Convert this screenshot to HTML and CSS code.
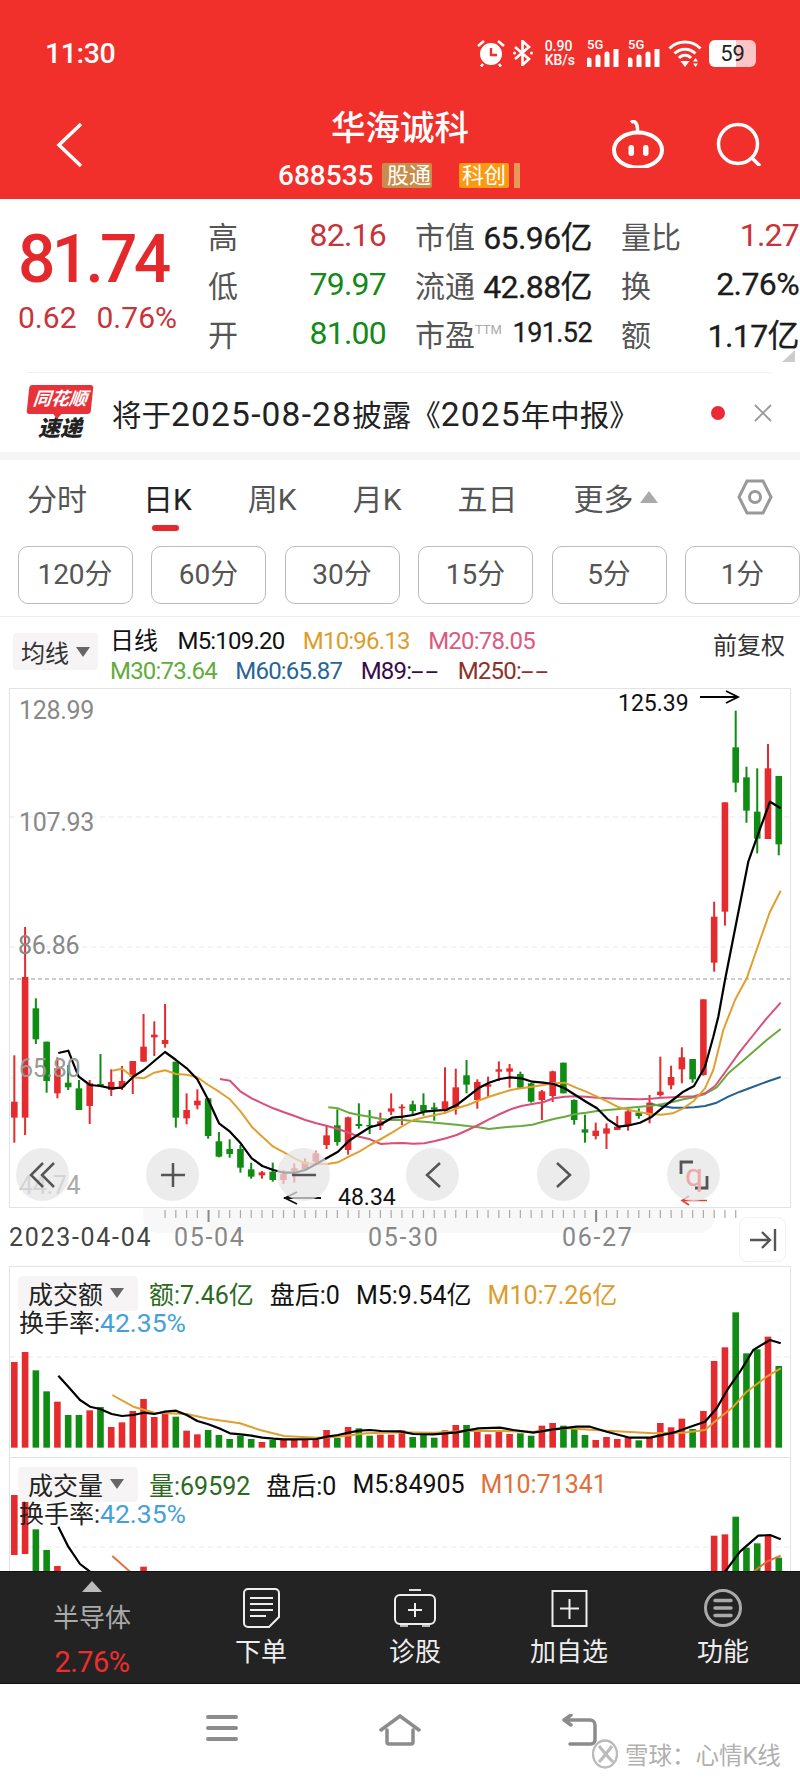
FILE: index.html
```html
<!DOCTYPE html>
<html lang="zh-CN">
<head>
    <meta charset="UTF-8">
    <meta name="viewport" content="width=device-width, initial-scale=1.0">
    <title>华海诚科</title>
    <link rel="stylesheet" href="styles.css">
</head>
<body>
    <!-- 顶部红色区域 -->
    <header class="top">
        <div class="status">
            <span class="clock">11:30</span>
            <div class="status-icons">
                <svg class="ico-alarm" viewBox="0 0 28 28" width="28" height="28">
                    <circle cx="14" cy="15" r="11" fill="#fff"/>
                    <path d="M14 9v7h6" fill="none" stroke="#f2302b" stroke-width="2.4"/>
                    <path d="M1 7l6-5M27 7l-6-5M6 25l-2 2.500M22 25l2 2.500" stroke="#fff" stroke-width="2.600" fill="none"/>
                </svg>
                <svg class="ico-bt" viewBox="0 0 22 26" width="22" height="26">
                    <path d="M3 7l14 12-6.500 6V1L17 7 3 19" fill="none" stroke="#fff" stroke-width="2.600"/>
                    <circle cx="2.500" cy="13" r="1.500" fill="#fff"/>
                    <circle cx="19.500" cy="13" r="1.500" fill="#fff"/>
                </svg>
                <div class="speed"><span>0.90</span><span>KB/s</span></div>
                <div class="signal">
                    <span class="sig-label">5G</span>
                    <svg viewBox="0 0 32 18" width="32" height="18"><path d="M2 11v6M11 8v9M20 5v12M29 1v16" stroke="#fff" stroke-width="5" stroke-linecap="round" fill="none"/></svg>
                </div>
                <div class="signal">
                    <span class="sig-label">5G</span>
                    <svg viewBox="0 0 32 18" width="32" height="18"><path d="M2 11v6M11 8v9M20 5v12M29 1v16" stroke="#fff" stroke-width="5" stroke-linecap="round" fill="none"/></svg>
                </div>
                <svg class="ico-wifi" viewBox="0 0 34 27" width="34" height="27">
                    <path d="M1.500 8.500a22 22 0 0 1 31 0M6.500 13.500a15 15 0 0 1 21 0M11 18a8 8 0 0 1 12 0" fill="none" stroke="#fff" stroke-width="3"/>
                    <path d="M17 27l-4.500-6h9zM27.500 18l2.500 3.500h-5zM27.500 27l2.500-3.500h-5z" fill="#fff"/>
                </svg>
                <div class="battery">59</div>
            </div>
        </div>
        <div class="nav">
            <svg class="back" viewBox="0 0 28 46" width="28" height="46"><path d="M25 2L3 23l22 21" fill="none" stroke="#fff" stroke-width="3.500"/></svg>
            <div class="title-box">
                <h1>华海诚科</h1>
                <div class="code-row">
                    <span class="code">688535</span>
                    <span class="tag tag-tan">股通</span>
                    <span class="tag tag-orange">科创</span>
                    <span class="tag-sliver"></span>
                </div>
            </div>
            <div class="nav-right">
                <svg viewBox="0 0 52 48" width="52" height="48">
                    <ellipse cx="26" cy="30" rx="24" ry="17.500" fill="none" stroke="#fff" stroke-width="4"/>
                    <path d="M19 2.500c3-2.500 7 0 6.500 9" fill="none" stroke="#fff" stroke-width="3.500"/>
                    <rect x="16.500" y="25" width="5.500" height="11" rx="2.700" fill="#fff"/>
                    <rect x="31" y="25" width="5.500" height="11" rx="2.700" fill="#fff"/>
                </svg>
                <svg viewBox="0 0 46 46" width="46" height="46">
                    <circle cx="22" cy="24" r="19.500" fill="none" stroke="#fff" stroke-width="3.500"/>
                    <path d="M36 38l8 8" stroke="#fff" stroke-width="3.500"/>
                </svg>
            </div>
        </div>
    </header>

    <!-- 行情 -->
    <section class="quote">
        <div class="quote-main">
            <div class="price-box">
                <div class="price">81.74</div>
                <div class="change"><span>0.62</span><span>0.76%</span></div>
            </div>
            <div class="quote-grid">
                <div class="cell"><span class="lab">高</span><span class="num up">82.16</span></div>
                <div class="cell"><span class="lab">市值</span><span class="val">65.96亿</span></div>
                <div class="cell"><span class="lab">量比</span><span class="num up">1.27</span></div>
                <div class="cell"><span class="lab">低</span><span class="num down">79.97</span></div>
                <div class="cell"><span class="lab">流通</span><span class="val">42.88亿</span></div>
                <div class="cell"><span class="lab">换</span><span class="val">2.76%</span></div>
                <div class="cell"><span class="lab">开</span><span class="num down">81.00</span></div>
                <div class="cell"><span class="lab">市盈<sup>TTM</sup></span><span class="val val-small">191.52</span></div>
                <div class="cell"><span class="lab">额</span><span class="val">1.17亿</span></div>
            </div>
            <span class="corner"></span>
        </div>
        <div class="news">
            <div class="news-logo">
                <span class="logo-top">同花顺</span>
                <span class="logo-bottom">速递</span>
            </div>
            <p>将于<span>2025-08-28</span>披露《<span>2025</span>年中报》</p>
            <span class="news-dot"></span>
            <svg class="news-x" viewBox="0 0 18 18" width="18" height="18"><path d="M1 1l16 16M17 1L1 17" stroke="#9a9a9a" stroke-width="1.800"/></svg>
        </div>
    </section>

    <!-- 周期 -->
    <section class="periods">
        <div class="tabs">
            <span>分时</span>
            <span class="active">日K</span>
            <span>周K</span>
            <span>月K</span>
            <span>五日</span>
            <span class="more">更多<i class="tri-up"></i></span>
            <svg class="hex" viewBox="0 0 36 36" width="36" height="36">
                <path d="M10 2h16l8 16-8 16H10L2 18z" fill="none" stroke="#999" stroke-width="3"/>
                <circle cx="18" cy="18" r="5.500" fill="none" stroke="#999" stroke-width="3"/>
            </svg>
        </div>
        <div class="minutes">
            <span>120分</span><span>60分</span><span>30分</span><span>15分</span><span>5分</span><span>1分</span>
        </div>
    </section>

    <!-- 均线图例 -->
    <section class="legend">
        <div class="picker picker-ma">均线<i class="tri-down"></i></div>
        <div class="legend-lines">
            <div class="legend-row">
                <span class="c-black legend-first">日线</span>
                <span class="c-black">M5:109.20</span>
                <span class="c-orange">M10:96.13</span>
                <span class="c-pink">M20:78.05</span>
            </div>
            <div class="legend-row">
                <span class="c-green">M30:73.64</span>
                <span class="c-blue">M60:65.87</span>
                <span class="c-purple">M89:<span class="dashes">--</span></span>
                <span class="c-brown">M250:<span class="dashes">--</span></span>
            </div>
        </div>
        <span class="fuquan">前复权</span>
    </section>

    <!-- K线图 -->
    <section class="kline">
        <svg id="klineSvg" class="chart" viewBox="10 689 780 518"></svg>
        <span class="axis axis-1">128.99</span>
        <span class="axis axis-2">107.93</span>
        <span class="axis axis-3">86.86</span>
        <span class="axis axis-4">65.80</span>
        <span class="axis axis-5">44.74</span>
        <span class="mark mark-high">125.39</span>
        <span class="mark mark-low">48.34</span>
        <button class="round r1"><svg viewBox="0 0 30 30" width="30" height="30"><path d="M15 3L3 15l12 12M26 3L14 15l12 12" fill="none" stroke="#555" stroke-width="2.500"/></svg></button>
        <button class="round r2"><svg viewBox="0 0 26 26" width="26" height="26"><path d="M13 1v24M1 13h24" stroke="#555" stroke-width="2.500"/></svg></button>
        <button class="round r3"><svg viewBox="0 0 26 26" width="26" height="26"><path d="M1 13h24" stroke="#555" stroke-width="2.500"/></svg></button>
        <button class="round r4"><svg viewBox="0 0 18 28" width="18" height="28"><path d="M16 2L3 14l13 12" fill="none" stroke="#555" stroke-width="2.500"/></svg></button>
        <button class="round r5"><svg viewBox="0 0 18 28" width="18" height="28"><path d="M2 2l13 12L2 26" fill="none" stroke="#555" stroke-width="2.500"/></svg></button>
        <button class="round r6"><svg viewBox="0 0 30 30" width="30" height="30"><path d="M14 2H2v12M16 28h12V16" fill="none" stroke="#555" stroke-width="2.800"/></svg></button>
        <span class="ghost-q">q</span>
    </section>

    <!-- 时间轴 -->
    <section class="timeline">
        <div class="scrollband"></div>
        <svg id="tickSvg" class="ticks" viewBox="0 0 800 14"></svg>
        <div class="dates">
            <span class="date-first">2023-04-04</span>
            <span class="date d1">05-04</span>
            <span class="date d2">05-30</span>
            <span class="date d3">06-27</span>
        </div>
        <div class="to-end"><svg viewBox="0 0 28 24" width="28" height="24"><path d="M1 12h20M13 4l8 8-8 8M26 1v22" fill="none" stroke="#555" stroke-width="2.400"/></svg></div>
    </section>

    <!-- 成交额 -->
    <section class="panel panel-amount">
        <svg id="amountSvg" class="chart" viewBox="10 1267 780 190"></svg>
        <div class="panel-head">
            <div class="picker picker-panel">成交额<i class="tri-down"></i></div>
            <span class="c-dgreen">额:7.46亿</span>
            <span class="c-black">盘后:0</span>
            <span class="c-black">M5:9.54亿</span>
            <span class="c-orange">M10:7.26亿</span>
        </div>
        <div class="rate">换手率:<span>42.35%</span></div>
    </section>

    <!-- 成交量 -->
    <section class="panel panel-volume">
        <svg id="volumeSvg" class="chart" viewBox="10 1458 780 113"></svg>
        <div class="panel-head">
            <div class="picker picker-panel">成交量<i class="tri-down"></i></div>
            <span class="c-dgreen">量:69592</span>
            <span class="c-black">盘后:0</span>
            <span class="c-black">M5:84905</span>
            <span class="c-coral">M10:71341</span>
        </div>
        <div class="rate">换手率:<span>42.35%</span></div>
    </section>

    <!-- 底部工具栏 -->
    <nav class="toolbar">
        <div class="tool tool-sector">
            <i class="tri-up tri-light"></i>
            <span class="sector-name">半导体</span>
            <span class="sector-pct">2.76%</span>
        </div>
        <div class="tool">
            <svg viewBox="0 0 37 40" width="37" height="40">
                <path d="M5 1h27a4 4 0 0 1 4 4v24L26 39H5a4 4 0 0 1-4-4V5a4 4 0 0 1 4-4z" fill="none" stroke="#eee" stroke-width="2"/>
                <path d="M7 10h23M7 16h23M7 22h23M7 28h16" stroke="#eee" stroke-width="2"/>
            </svg>
            <span>下单</span>
        </div>
        <div class="tool">
            <svg viewBox="0 0 44 40" width="44" height="40">
                <path d="M16 2h12" stroke="#ddd" stroke-width="2"/>
                <rect x="2" y="7" width="40" height="29" rx="5" fill="none" stroke="#eee" stroke-width="2"/>
                <path d="M22 15v14M15 22h14" stroke="#eee" stroke-width="2"/>
                <path d="M7 37h8v2H7zM29 37h8v2h-8z" fill="#bbb"/>
            </svg>
            <span>诊股</span>
        </div>
        <div class="tool">
            <svg viewBox="0 0 37 40" width="37" height="40">
                <rect x="1.500" y="3" width="34" height="35" fill="none" stroke="#eee" stroke-width="2"/>
                <path d="M18.500 11v20M9 20.500h19" stroke="#eee" stroke-width="2"/>
            </svg>
            <span>加自选</span>
        </div>
        <div class="tool">
            <svg viewBox="0 0 40 40" width="40" height="40">
                <circle cx="20" cy="20" r="17.500" fill="none" stroke="#aaa" stroke-width="3"/>
                <path d="M12 12.500h16M12 20h16M12 27.500h16" stroke="#aaa" stroke-width="3.500" stroke-linecap="round"/>
            </svg>
            <span>功能</span>
        </div>
    </nav>

    <!-- 系统导航 -->
    <footer class="sysnav">
        <svg viewBox="0 0 32 28" width="32" height="28"><path d="M2 3h28M2 14h28M2 25h28" stroke="#8c8c8c" stroke-width="4" stroke-linecap="round"/></svg>
        <svg viewBox="0 0 42 32" width="42" height="32"><path d="M2 16L21 2l19 14M8 16v12a2 2 0 0 0 2 2h22a2 2 0 0 0 2-2V16" fill="none" stroke="#8c8c8c" stroke-width="3.500" stroke-linecap="round"/></svg>
        <svg viewBox="0 0 36 32" width="36" height="32"><path d="M2 6h26a5 5 0 0 1 5 5v15a4 4 0 0 1-4 4H8M2 6l7-5M2 6l7 5" fill="none" stroke="#8c8c8c" stroke-width="3.500" stroke-linecap="round"/></svg>
        <div class="watermark">
            <svg viewBox="0 0 26 30" width="26" height="30"><ellipse cx="13" cy="15" rx="12" ry="13.500" fill="none" stroke="#bbb" stroke-width="2.400"/><path d="M7 7c4 5 9 11 14 16M20 7c-4 5-8 11-13 16" fill="none" stroke="#bbb" stroke-width="3"/></svg>
            <span>雪球：心情K线</span>
        </div>
    </footer>

    <script src="chart.js"></script>
</body>
</html>
```

FILE: styles.css
```css
* {
    box-sizing: border-box;
}
body {
    margin: 0;
    width: 800px;
    height: 1778px;
    overflow: hidden;
    background-color: #fff;
    color: #222;
    font-family: Roboto, "Noto Sans CJK SC", sans-serif;
}
svg {
    display: block;
}

/* 顶部 */
.top {
    height: 199px;
    padding-top: 38px;
    background-color: #f2302b;
    color: #fff;
}
.status {
    display: flex;
    justify-content: space-between;
    align-items: center;
    height: 30px;
    padding: 0 44px 0 45px;
}
.clock {
    font-size: 28.500px;
    font-weight: 500;
    letter-spacing: -0.4px;
}
.status-icons {
    display: flex;
    align-items: center;
}
.ico-alarm {
    margin-right: -1px;
}
.ico-bt {
    margin-left: 8px;
}
.speed {
    display: flex;
    flex-direction: column;
    margin-left: 11px;
    font-size: 14px;
    line-height: 14px;
    font-weight: 500;
}
.signal {
    position: relative;
    width: 32px;
    height: 27px;
    margin-left: 9px;
    padding-top: 9px;
}
.speed + .signal {
    margin-left: 12px;
}
.sig-label {
    position: absolute;
    top: -2px;
    left: 0;
    font-size: 13px;
    line-height: 14px;
    font-weight: 500;
}
.ico-wifi {
    margin-left: 8px;
}
.battery {
    width: 47px;
    height: 27px;
    margin-left: 7px;
    border-radius: 6px;
    background: linear-gradient(90deg, #fff 0, #fff 58%, #fdc6c6 58%, #fdc6c6 100%);
    color: #222;
    font-size: 22px;
    line-height: 27px;
    text-align: center;
}
.nav {
    position: relative;
    display: flex;
    align-items: flex-start;
    justify-content: space-between;
    padding: 30px 38px 0 56px;
}
.back {
    margin-top: 24px;
}
.title-box {
    position: absolute;
    left: 0;
    right: 0;
    top: 38px;
    text-align: center;
}
h1 {
    margin: 0;
    font-size: 34.500px;
    line-height: 44px;
    font-weight: 500;
}
.code-row {
    display: flex;
    align-items: center;
    height: 26px;
    margin-top: 12px;
    padding-left: 278px;
    text-align: left;
}
.code {
    width: 104px;
    font-size: 28px;
    font-weight: 500;
}
.tag {
    width: 50px;
    height: 25px;
    border-radius: 2px;
    font-size: 22px;
    line-height: 25px;
    text-align: center;
}
.tag-tan {
    padding-left: 4px;
    margin-right: 27px;
    background-color: #c98c4a;
}
.tag-orange {
    background-color: #f89a12;
}
.tag-sliver {
    width: 6px;
    height: 25px;
    margin-left: 5px;
    background-color: #e79a58;
}
.nav-right {
    display: flex;
    align-items: flex-start;
    gap: 52px;
    margin-top: 22px;
}

/* 行情 */
.quote {
    height: 253px;
}
.quote-main {
    position: relative;
    display: flex;
    height: 173px;
}
.price-box {
    width: 208px;
    padding: 27px 0 0 18px;
}
.price {
    font-size: 66px;
    line-height: 68px;
    font-weight: 500;
    color: #e4292d;
    letter-spacing: -3.800px;
}
.change {
    display: flex;
    gap: 20px;
    margin-top: 7px;
    font-size: 30px;
    line-height: 34px;
    color: #c8343a;
}
.quote-grid {
    display: grid;
    grid-template-columns: 178px 177px 178px;
    grid-auto-rows: 49px;
    column-gap: 29px;
    padding-top: 11px;
}
.cell {
    display: flex;
    justify-content: space-between;
    align-items: center;
}
.lab {
    font-size: 30px;
    color: #555;
}
.lab sup {
    font-size: 13px;
    color: #aaa;
    vertical-align: 12px;
    line-height: 0;
}
.num {
    font-size: 32px;
    letter-spacing: -0.8px;
}
.val {
    font-size: 32px;
    color: #1c1c1c;
    letter-spacing: -0.6px;
    -webkit-text-stroke: 0.3px #1c1c1c;
}
.val-small {
    font-size: 27px;
}
.up {
    color: #c8343a;
}
.down {
    color: #128a18;
}
.corner {
    position: absolute;
    right: 5px;
    bottom: 10px;
    border-style: solid;
    border-width: 0 0 12px 13px;
    border-color: transparent transparent #ccc transparent;
}
.news {
    display: flex;
    align-items: center;
    height: 80px;
    margin: 0 28px 0 27px;
    border-top: 1px solid #f0f0f0;
}
.news-logo {
    display: flex;
    flex-direction: column;
    align-items: center;
    width: 66px;
    font-style: italic;
}
.logo-top {
    position: relative;
    width: 64px;
    height: 29px;
    margin-bottom: 2px;
    background-color: #e8323a;
    border-radius: 3px;
    color: #fff;
    font-size: 18px;
    line-height: 28px;
    font-weight: 700;
    text-align: center;
    transform: skewX(-6deg);
}
.logo-top::after {
    content: "";
    position: absolute;
    left: 26px;
    bottom: -5px;
    border-style: solid;
    border-width: 6px 5px 0 5px;
    border-color: #e8323a transparent transparent transparent;
}
.logo-bottom {
    font-size: 22px;
    line-height: 25px;
    font-weight: 900;
    color: #222;
}
.news p {
    margin: 0 0 0 19px;
    font-size: 29.500px;
    color: #222;
    white-space: nowrap;
}
.news p span {
    font-size: 33.500px;
    line-height: 1;
    letter-spacing: 1.200px;
}
.news-dot {
    width: 14px;
    height: 14px;
    margin-left: auto;
    border-radius: 50%;
    background-color: #ea2a36;
}
.news-x {
    margin: 0 0 0 29px;
}

/* 周期 */
.periods {
    height: 165px;
    border-top: 8px solid #f5f5f5;
    border-bottom: 1px solid #eee;
}
.tabs {
    display: flex;
    align-items: center;
    gap: 56px;
    height: 72px;
    padding: 2px 27px 0 27px;
    font-size: 30px;
    color: #555;
}
.tabs .active {
    position: relative;
    color: #222;
}
.tabs .active::after {
    content: "";
    position: absolute;
    left: 9px;
    top: 50px;
    width: 27px;
    height: 6px;
    border-radius: 3px;
    background-color: #e4282e;
}
.more {
    display: flex;
    align-items: center;
}
.tri-up {
    display: inline-block;
    width: 0;
    height: 0;
    margin-left: 7px;
    border-style: solid;
    border-width: 0 9px 12px 9px;
    border-color: transparent transparent #aaa transparent;
}
.hex {
    margin-left: auto;
}
.minutes {
    display: flex;
    gap: 18.500px;
    padding: 14px 0 0 17.500px;
    overflow: hidden;
}
.minutes span {
    flex: none;
    width: 115px;
    height: 58px;
    border: 1px solid #bbb;
    border-radius: 10px;
    font-size: 28px;
    line-height: 56px;
    text-align: center;
    color: #555;
}

/* 图例 */
.legend {
    position: relative;
    display: flex;
    height: 71px;
    padding: 11px 0 0 13px;
}
.picker {
    display: flex;
    align-items: center;
    background-color: #f6f4f5;
    border-radius: 4px;
    color: #333;
}
.picker-ma {
    width: 85px;
    height: 37px;
    margin-top: 5px;
    padding-left: 8px;
    font-size: 24px;
}
.tri-down {
    display: inline-block;
    width: 0;
    height: 0;
    margin-left: 7px;
    border-style: solid;
    border-width: 10px 7px 0 7px;
    border-color: #666 transparent transparent transparent;
}
.legend-lines {
    margin-left: 12px;
    font-size: 24px;
    letter-spacing: -0.8px;
}
.legend-row {
    display: flex;
    gap: 18.500px;
    height: 30px;
    line-height: 26px;
    white-space: nowrap;
}
.legend-first {
    margin-right: 1px;
    letter-spacing: 0;
}
.dashes {
    display: inline-block;
    width: 28px;
    letter-spacing: 1px;
    transform: scaleX(1.900);
    transform-origin: left center;
}
.fuquan {
    position: absolute;
    top: 9px;
    right: 15px;
    font-size: 24px;
    color: #333;
}
.c-black { color: #111; }
.c-orange { color: #dd9c2b; }
.c-pink { color: #dc5a7f; }
.c-green { color: #62ac3c; }
.c-blue { color: #296596; }
.c-purple { color: #3a0a4a; }
.c-brown { color: #8c3228; }
.c-dgreen { color: #2b6a1e; }
.c-coral { color: #e0703c; }

/* K线图 */
.kline {
    position: relative;
    width: 782px;
    height: 520px;
    margin-left: 9px;
    border: 1px solid #e3e3e3;
}
.chart {
    position: absolute;
    left: 0;
    top: 0;
    width: 100%;
    height: 100%;
}
.axis {
    position: absolute;
    left: 9px;
    font-size: 25px;
    line-height: 28px;
    letter-spacing: -0.3px;
    color: #888;
}
.axis-1 { top: 8px; }
.axis-2 { top: 120px; }
.axis-3 { top: 243px; left: 8px; }
.axis-4 { top: 366px; color: #999; }
.axis-5 { top: 483px; color: #aaa; }
.mark {
    position: absolute;
    font-size: 23px;
    line-height: 26px;
    color: #111;
}
.mark-high {
    left: 608px;
    top: 2px;
}
.mark-low {
    left: 328px;
    top: 496px;
}
.round {
    position: absolute;
    top: 459px;
    display: flex;
    align-items: center;
    justify-content: center;
    width: 53px;
    height: 53px;
    padding: 0;
    border: none;
    border-radius: 50%;
    background-color: rgba(228, 228, 228, 0.72);
}
.r1 { left: 6px; }
.r2 { left: 136px; }
.r3 { left: 267px; }
.r4 { left: 396px; }
.r5 { left: 527px; }
.r6 { left: 657px; }
.ghost-q {
    position: absolute;
    left: 675px;
    top: 468px;
    font-size: 32px;
    line-height: 36px;
    color: #eda9a9;
}

/* 时间轴 */
.timeline {
    position: relative;
    height: 58px;
}
.scrollband {
    position: absolute;
    left: 143px;
    top: 0;
    width: 572px;
    height: 25px;
    border-radius: 0 0 16px 16px;
    background-color: #f8f8f8;
}
.ticks {
    position: absolute;
    left: 0;
    top: 0;
    width: 800px;
    height: 14px;
}
.dates {
    position: relative;
    height: 58px;
    font-size: 25px;
    color: #888;
    letter-spacing: 1.700px;
}
.date-first {
    position: absolute;
    left: 9px;
    top: 15px;
    color: #444;
}
.date {
    position: absolute;
    top: 15px;
}
.d1 { left: 174px; }
.d2 { left: 368px; }
.d3 { left: 562px; }
.to-end {
    position: absolute;
    left: 739px;
    top: 9px;
    display: flex;
    align-items: center;
    justify-content: center;
    width: 47px;
    height: 45px;
    border: 1px solid #f1f1f1;
    border-radius: 8px;
}

/* 副图 */
.panel {
    position: relative;
    width: 782px;
    margin-left: 9px;
    border: 1px solid #e3e3e3;
    border-bottom: none;
    font-size: 25px;
}
.panel-amount {
    height: 191px;
}
.panel-volume {
    height: 114px;
    overflow: hidden;
}
.panel-head {
    position: relative;
    display: flex;
    align-items: center;
    gap: 16px;
    padding: 8px 0 0 8px;
    white-space: nowrap;
}
.picker-panel {
    width: 120px;
    height: 35px;
    margin-right: -5px;
    padding-left: 10px;
    font-size: 25px;
    color: #222;
}
.rate {
    position: relative;
    margin: -4px 0 0 9px;
    line-height: 32px;
    color: #222;
}
.rate span {
    font-size: 26.500px;
    color: #45a0da;
}

/* 底部工具栏 */
.toolbar {
    display: grid;
    grid-template-columns: 184px 154px 154px 154px 154px;
    height: 113px;
    background-color: #232323;
    border-top: 1px solid #111;
    border-bottom: 1px solid #111;
    color: #eee;
    font-size: 26px;
}
.tool {
    display: flex;
    flex-direction: column;
    align-items: center;
    padding-top: 16px;
}
.tool span {
    line-height: 36px;
    margin-top: 6px;
}
.tool-sector {
    padding-top: 9px;
}
.tri-light {
    margin: 0;
    border-bottom-color: #bbb;
    border-width: 0 10px 11px 10px;
}
.tool-sector .sector-name {
    margin-top: 8px;
    color: #aaa;
}
.tool-sector .sector-pct {
    margin-top: 8px;
    font-size: 29px;
    letter-spacing: -0.6px;
    color: #ee2e2e;
}

/* 系统导航 */
.sysnav {
    position: relative;
    display: flex;
    align-items: flex-start;
    height: 94px;
    padding: 30px 0 0 206px;
    gap: 141px;
}
.watermark {
    position: absolute;
    left: 592px;
    top: 53px;
    display: flex;
    align-items: center;
    gap: 7px;
    font-size: 23.500px;
    color: #b0b0b0;
    text-shadow: 0 0 1px #fff;
}
```

FILE: chart.js
```js
// 坐标都按截图放大 3 倍后读取: x 为页面 x*3, y 为相对基准线的值
const RED = '#e62b2e';
const GREEN = '#108c14';
const NS = 'http://www.w3.org/2000/svg';

function slotX(i) {
    return (43 + 32.3 * i) / 3;
}

function add(svg, name, attrs) {
    const el = document.createElementNS(NS, name);
    Object.keys(attrs).forEach(key => el.setAttribute(key, attrs[key]));
    svg.appendChild(el);
    return el;
}

function drawLine(svg, pts, color, width, toY) {
    const d = pts.map(p => (p[0] / 3).toFixed(1) + ',' + toY(p[1]).toFixed(1)).join(' ');
    add(svg, 'polyline', {
        points: d,
        fill: 'none',
        stroke: color,
        'stroke-width': width,
        'stroke-linejoin': 'round'
    });
}

function drawDash(svg, y, color, dash) {
    add(svg, 'line', { x1: 10, x2: 790, y1: y, y2: y, stroke: color, 'stroke-width': 1, 'stroke-dasharray': dash });
}

// 主图 [r/g, 最高, 实体上, 实体下, 最低]
const candles = [
    'r 226 365 413 488', 'r -159 -9 413 465', 'g 55 85 178 192', 'g 185 185 303 338',
    'r 232 265 340 355', 'g 255 308 322 330', 'g 300 325 390 390', 'r 300 310 378 432',
    'g 222 312 318 320', 'r 268 306 330 348', 'r 258 303 322 330', 'r 243 243 290 342',
    'r 102 200 245 245', 'r 124 164 172 228', 'r 72 180 192 203', 'g 245 245 413 443',
    'r 340 390 415 433', 'r 328 362 376 388', 'g 355 355 468 476', 'g 456 484 530 532',
    'g 478 507 522 533', 'g 495 507 563 578', 'g 548 568 590 596', 'r 573 577 586 596',
    'g 548 575 600 605', 'r 570 582 600 612', 'r 550 565 572 608', 'r 535 545 568 570',
    'r 512 520 545 552', 'r 437 466 495 507', 'g 388 436 486 497', 'r 410 412 510 524',
    'g 370 432 438 446', 'g 390 435 437 462', 'r 398 424 437 450', 'r 340 385 395 405',
    'r 373 380 385 435', 'g 362 373 393 408', 'g 340 375 395 407', 'g 368 382 388 422',
    'r 262 364 392 395', 'r 266 322 385 404', 'g 240 286 314 340', 'r 298 306 360 386',
    'r 290 313 320 352', 'r 244 268 275 303', 'r 252 265 275 323', 'g 275 282 323 325',
    'g 308 310 365 368', 'r 330 334 360 420', 'r 272 274 348 366', 'g 248 248 340 340',
    'g 358 360 420 434', 'g 404 448 458 488', 'r 428 452 468 478', 'r 430 445 461 507',
    'r 408 440 450 450', 'r 390 394 438 452', 'g 385 398 408 416', 'r 345 368 405 430',
    'r 230 335 345 350', 'r 257 291 316 328', 'r 202 232 268 310', 'g 237 237 298 308',
    'r 58 58 285 287', 'r -235 -190 -52 -25', 'r -533 -533 -205 -163', 'g -808 -698 -592 -563',
    'g -640 -608 -508 -472', 'g -635 -505 -424 -380', 'r -708 -635 -423 -423', 'g -612 -612 -407 -374'
];

const ma5 = [[175,219],[205,212],[220,250],[236,290],[270,315],[300,318],[335,325],[366,323],[400,290],[431,270],[463,243],[495,216],[528,240],[560,265],[592,298],[625,360],[657,430],[690,455],[722,490],[755,535],[787,558],[820,570],[852,578],[884,578],[916,570],[949,552],[982,533],[1014,515],[1046,483],[1078,462],[1110,442],[1143,433],[1176,413],[1208,410],[1240,405],[1273,395],[1305,392],[1338,390],[1370,375],[1403,350],[1435,325],[1467,308],[1500,297],[1532,292],[1564,295],[1597,305],[1629,308],[1661,312],[1694,325],[1726,345],[1758,365],[1791,385],[1823,418],[1856,440],[1888,436],[1920,428],[1953,412],[1985,385],[2018,360],[2050,335],[2082,318],[2115,260],[2140,170],[2155,110],[2175,0],[2245,-355],[2277,-445],[2310,-535],[2342,-515]];
const ma10 = [[337,272],[366,266],[400,292],[431,295],[463,278],[495,271],[528,282],[560,284],[592,292],[625,315],[657,335],[690,358],[722,395],[755,440],[787,470],[820,500],[852,517],[884,535],[916,550],[949,552],[982,552],[1014,547],[1046,530],[1078,515],[1110,495],[1143,477],[1176,458],[1208,438],[1240,420],[1273,412],[1305,405],[1338,398],[1370,385],[1403,375],[1435,362],[1467,350],[1500,340],[1532,330],[1564,325],[1597,320],[1629,315],[1661,310],[1694,308],[1726,322],[1758,335],[1791,350],[1823,365],[1856,382],[1888,390],[1920,397],[1953,402],[1985,404],[2018,400],[2050,385],[2082,362],[2115,325],[2140,270],[2170,150],[2205,60],[2240,-5],[2275,-105],[2310,-205],[2342,-268]];
const ma20 = [[660,297],[690,302],[722,335],[755,355],[787,370],[820,385],[852,397],[884,408],[916,420],[949,430],[982,438],[1014,447],[1046,458],[1078,470],[1110,478],[1143,492],[1176,490],[1208,489],[1240,491],[1273,490],[1305,483],[1338,475],[1370,465],[1403,450],[1435,435],[1467,418],[1500,402],[1532,388],[1564,378],[1597,372],[1629,367],[1661,355],[1694,350],[1726,349],[1758,350],[1791,353],[1823,355],[1856,356],[1888,357],[1920,358],[1953,356],[1985,353],[2018,352],[2050,350],[2082,349],[2115,340],[2145,318],[2180,270],[2220,215],[2260,165],[2300,115],[2342,68]];
const ma30 = [[985,382],[1014,385],[1046,398],[1078,405],[1110,410],[1143,417],[1176,420],[1208,420],[1240,423],[1273,425],[1305,428],[1338,431],[1370,434],[1403,438],[1435,442],[1467,447],[1500,443],[1532,440],[1564,438],[1597,434],[1629,425],[1661,417],[1694,410],[1726,402],[1758,398],[1791,393],[1823,390],[1856,387],[1888,383],[1920,380],[1953,377],[1985,373],[2018,366],[2050,358],[2082,352],[2115,342],[2150,322],[2185,280],[2220,250],[2260,215],[2300,180],[2342,147]];
const ma60 = [[1953,372],[1985,378],[2018,383],[2050,383],[2082,382],[2115,378],[2150,368],[2185,350],[2220,335],[2260,320],[2300,305],[2342,291]];

function drawKline() {
    const svg = document.getElementById('klineSvg');
    const toY = z => 980 + z / 3;
    drawDash(svg, 817, '#e8e8e8', '5 4');
    drawDash(svg, 947, '#e8e8e8', '5 4');
    drawDash(svg, 979, '#999', '4 3');
    drawDash(svg, 1078, '#eeeeee', '5 4');
    candles.forEach((row, i) => {
        const c = row.split(' ');
        const color = c[0] === 'r' ? RED : GREEN;
        const x = slotX(i);
        add(svg, 'rect', { x: x - 1, y: toY(+c[1]), width: 2, height: (c[4] - c[1]) / 3, fill: color });
        add(svg, 'rect', { x: x - 3.3, y: toY(+c[2]), width: 6.6, height: Math.max((c[3] - c[2]) / 3, 1.5), fill: color });
    });
    drawLine(svg, ma60, '#23608f', 2, toY);
    drawLine(svg, ma30, '#6aaa3c', 2, toY);
    drawLine(svg, ma20, '#d8507a', 2, toY);
    drawLine(svg, ma10, '#e0a030', 2, toY);
    drawLine(svg, ma5, '#000', 2.2, toY);
    // 最高最低箭头
    add(svg, 'path', { d: 'M700 697h37M726 691l12 6-12 6', fill: 'none', stroke: '#000', 'stroke-width': 1.8 });
    add(svg, 'path', { d: 'M284 1198h37M297 1192l-12 6 12 6', fill: 'none', stroke: '#111', 'stroke-width': 1.8 });
    add(svg, 'path', { d: 'M682 1200.500h25M689 1196l-7 4.500 7 4.500', fill: 'none', stroke: '#e0403a', 'stroke-width': 1.6 });
}

function drawTicks() {
    const svg = document.getElementById('tickSvg');
    for (let i = 14; i < 68; i++) {
        const big = i === 18 || i === 54;
        add(svg, 'rect', { x: slotX(i) - 0.6, y: 2, width: big ? 2 : 1.2, height: big ? 12 : 8, fill: big ? '#888' : '#aaa' });
    }
}

const amountTops = [306,276,331,394,425,465,465,451,441,501,487,453,417,471,462,470,512,523,510,525,537,527,537,546,540,537,540,540,538,510,534,501,505,527,524,524,511,531,525,533,511,495,495,513,523,513,522,520,527,497,489,497,507,525,540,531,537,531,541,531,489,502,476,507,453,303,262,157,280,268,230,318];
const amountMa5 = [[175,347],[205,380],[240,420],[270,440],[300,447],[335,462],[366,468],[400,465],[431,458],[463,462],[495,455],[528,452],[560,465],[592,483],[625,493],[657,505],[690,520],[722,523],[755,527],[787,533],[820,536],[852,538],[884,538],[949,537],[982,530],[1014,525],[1046,518],[1078,512],[1110,510],[1143,513],[1200,514],[1240,522],[1300,523],[1370,517],[1435,505],[1500,503],[1540,510],[1600,518],[1660,508],[1730,500],[1770,500],[1820,515],[1890,533],[1950,533],[2020,518],[2080,497],[2115,485],[2150,445],[2185,385],[2220,335],[2260,270],[2310,240],[2342,250]];
const amountMa10 = [[337,405],[400,440],[463,458],[560,462],[625,476],[720,490],[780,510],[852,528],[949,533],[1014,530],[1100,520],[1200,517],[1300,518],[1400,513],[1500,513],[1600,515],[1700,505],[1820,512],[1960,520],[2050,518],[2115,510],[2150,480],[2200,440],[2240,395],[2300,350],[2342,325]];

function drawAmount() {
    const svg = document.getElementById('amountSvg');
    const toY = z => 1260 + z / 3;
    drawDash(svg, 1357, '#e8e8e8', '5 4');
    amountTops.forEach((top, i) => {
        const color = candles[i][0] === 'r' ? RED : GREEN;
        add(svg, 'rect', { x: slotX(i) - 3.3, y: toY(top), width: 6.6, height: (563 - top) / 3, fill: color });
    });
    drawLine(svg, amountMa10, '#e0a030', 2, toY);
    drawLine(svg, amountMa5, '#000', 2.2, toY);
}

// 成交量只露出上半截, 其余柱子被底部工具栏挡住
const volumeTops = { 0: 705, 1: 702, 2: 808, 3: 870, 4: 918, 12: 920, 65: 827, 66: 823, 67: 770, 68: 863, 69: 850, 70: 825, 71: 893 };

function drawVolume() {
    const svg = document.getElementById('volumeSvg');
    const toY = z => 1260 + z / 3;
    drawDash(svg, 1547, '#e8e8e8', '5 4');
    Object.keys(volumeTops).forEach(i => {
        const color = candles[i][0] === 'r' ? RED : GREEN;
        add(svg, 'rect', { x: slotX(i) - 3.3, y: toY(volumeTops[i]), width: 6.6, height: 60, fill: color });
    });
    drawLine(svg, [[175,800],[205,860],[240,912],[270,935]], '#000', 2.2, toY);
    drawLine(svg, [[337,888],[390,935]], '#e07040', 2, toY);
    drawLine(svg, [[2175,935],[2220,875],[2275,827],[2310,825],[2342,838]], '#000', 2.2, toY);
    drawLine(svg, [[2260,935],[2300,905],[2342,887]], '#e07040', 2, toY);
}

drawKline();
drawTicks();
drawAmount();
drawVolume();
```
